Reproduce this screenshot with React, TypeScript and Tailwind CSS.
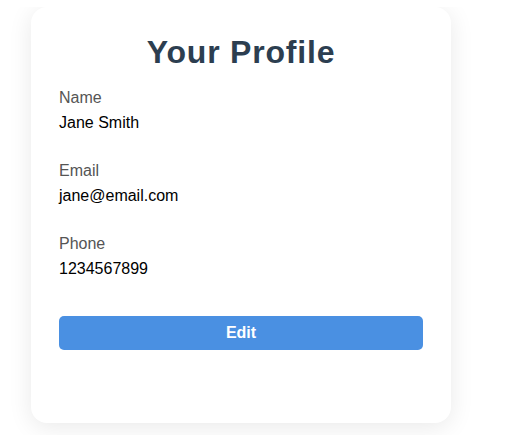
const fields = [
  { label: 'Name', value: 'Jane Smith' },
  { label: 'Email', value: 'jane@email.com' },
  { label: 'Phone', value: '1234567899' },
];

export default function App() {
  return (
    <div className="h-[435px] bg-white font-['Liberation_Sans',Arial,sans-serif]">
      <div className="pt-[7px]">
        <div className="overflow-hidden pl-[31px] pb-[14px]">
          <div className="w-[420px] rounded-[16px] bg-white px-[28px] pt-[27px] pb-[73px] shadow-[0_4px_24px_rgba(0,0,0,0.09)]">
            <h2 className="mb-[18px] text-center text-[32px] leading-[37px] font-bold tracking-[0.8px] text-[#2c3e50]">
              Your Profile
            </h2>
            <div className="flex flex-col gap-[30px]">
              {fields.map((f) => (
                <div key={f.label}>
                  <div className="mb-[7px] text-[16px] leading-[18px] text-[#555]">{f.label}</div>
                  <div className="text-[16px] leading-[18px] text-black">{f.value}</div>
                </div>
              ))}
            </div>
            <button className="mt-[38px] h-[34px] w-full rounded-[5px] bg-[#4a90e2] text-[16px] font-bold text-white">
              Edit
            </button>
          </div>
        </div>
      </div>
    </div>
  );
}
